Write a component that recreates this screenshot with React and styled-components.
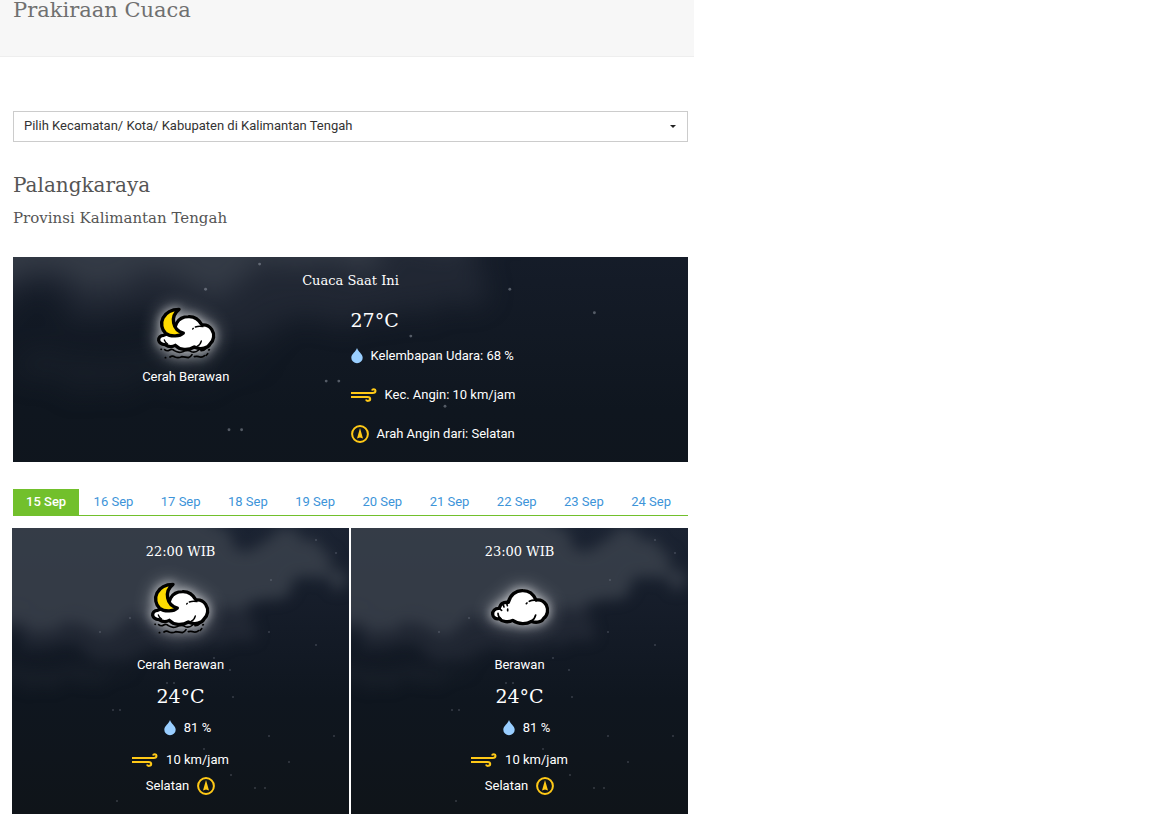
import React, { useState } from "react";
import styled, { createGlobalStyle } from "styled-components";

const slab = `"Roboto Slab", "DejaVu Serif", serif`;

const GlobalStyle = createGlobalStyle`
  *, *::before, *::after { box-sizing: border-box; }
  body {
    margin: 0;
    background: #fff;
    color: #333;
    font-family: Roboto, "Liberation Sans", sans-serif;
    font-size: 13px;
    line-height: 20px;
  }
  h1, h2, h3, p { margin: 0; padding: 0; font-weight: 400; }
`;

const Page = styled.div`
  display: grid;
  grid-template-columns: minmax(0, 347fr) minmax(0, 229fr);
`;

const Column = styled.div`
  grid-column: 1;
`;

const Header = styled.header`
  padding: 0 13px 36px;
  background: #f7f7f7;
  border-bottom: 1px solid #eee;
`;

const Title = styled.h1`
  color: #707070;
  font-family: ${slab};
  font-size: 21px;
  line-height: 20px;
`;

const Main = styled.main`
  padding: 54px 6px 5px 13px;
`;

const SelectField = styled.div`
  display: grid;
  align-items: center;
`;

const Select = styled.select`
  grid-area: 1 / 1;
  width: 100%;
  height: 31px;
  padding: 0 24px 2px 10px;
  appearance: none;
  border: 1px solid #ccc;
  border-radius: 0;
  background: #fff;
  color: #333;
  font-family: inherit;
  font-size: 13px;
`;

const Caret = styled.svg`
  grid-area: 1 / 1;
  justify-self: end;
  margin-right: 12px;
  pointer-events: none;
`;

const Place = styled.h2`
  margin-top: 28px;
  color: #555;
  font-family: ${slab};
  font-size: 20px;
  line-height: 30px;
`;

const Province = styled.p`
  margin-top: 8px;
  color: #555;
  font-family: ${slab};
  font-size: 15px;
  line-height: 20px;
`;

const Panel = styled.section`
  position: relative;
  isolation: isolate;
  overflow: hidden;
  background: #10151d;
  color: #fff;
`;

const Sky = styled.svg`
  position: absolute;
  inset: 0;
  z-index: -1;
  width: 100%;
  height: 100%;
`;

const Current = styled(Panel)`
  margin-top: 29px;
  padding: 14px 0 18px;
`;

const PanelTitle = styled.h3`
  font-family: ${slab};
  font-size: 13px;
  line-height: 20px;
  text-align: center;
`;

const CurrentBody = styled.div`
  display: grid;
  grid-template-columns: 1fr 1fr;
  margin-top: 14px;
`;

const CurrentSky = styled.div`
  display: flex;
  flex-direction: column;
  align-items: center;
  gap: 7px;
  padding: 3px 0 0 8px;
`;

const Readings = styled.div`
  display: flex;
  flex-direction: column;
  gap: 19px;
`;

const Temperature = styled.p`
  font-family: ${slab};
  font-size: 19px;
  line-height: 30px;
`;

const CurrentTemperature = styled(Temperature)`
  margin-bottom: -8px;
`;

const Reading = styled.p`
  display: flex;
  align-items: center;
  gap: 8px;
  height: 20px;
  padding-left: ${(p) => (p.$indent ? "14px" : "0")};
`;

const Tabs = styled.div`
  display: flex;
  justify-content: space-between;
  margin-top: 27px;
  padding-right: 4px;
  border-bottom: 1px solid #72c02c;
`;

const Tab = styled.button`
  height: 26px;
  padding: 0 13px 2px;
  border: 0;
  background: ${(p) => (p.$active ? "#72c02c" : "transparent")};
  color: ${(p) => (p.$active ? "#fff" : "#3d94d9")};
  font-family: inherit;
  font-size: 13px;
  font-weight: ${(p) => (p.$active ? 500 : 400)};
  white-space: nowrap;
  cursor: pointer;
`;

const Hours = styled.div`
  display: grid;
  grid-template-columns: 1fr 1fr;
  gap: 2px;
  margin: 12px 0 0 -1px;
`;

const Hour = styled(Panel)`
  display: flex;
  flex-direction: column;
  align-items: center;
  padding: 14px 0 18px;
`;

const HourSky = styled.div`
  display: flex;
  flex-direction: column;
  align-items: center;
  gap: 20px;
  margin: 21px 0 6px;
`;

const HourReadings = styled.div`
  display: flex;
  flex-direction: column;
  align-items: center;
  margin-top: 7px;
`;

const HourReading = styled(Reading)`
  margin-bottom: ${(p) => (p.$tight ? "6px" : "12px")};
  &:last-child { margin-bottom: 0; }
`;

const Glow = styled.svg`
  display: block;
  overflow: visible;
  filter: drop-shadow(0 0 5px rgba(255, 255, 255, 0.55)) drop-shadow(0 0 9px rgba(255, 255, 255, 0.5));
`;

const stars = [
  [323, 12], [343, 25], [278, 52], [137, 90], [107, 104], [276, 104], [323, 117],
  [221, 130], [237, 142], [174, 155], [181, 155], [240, 169], [120, 182], [127, 182],
  [276, 208], [341, 208], [211, 221], [296, 234], [238, 247], [262, 260], [272, 260], [124, 273],
];

function NightSky({ id }) {
  return (
    <Sky viewBox="0 0 375 286" preserveAspectRatio="xMidYMid slice" aria-hidden="true">
      <defs>
        <linearGradient id={`${id}-base`} x1="0" y1="0" x2="0" y2="1">
          <stop offset="0" stopColor="#1b2332" />
          <stop offset="0.35" stopColor="#141b27" />
          <stop offset="0.6" stopColor="#0f161f" />
          <stop offset="1" stopColor="#0f1419" />
        </linearGradient>
        <filter id={`${id}-cloud`} x="-20%" y="-20%" width="140%" height="140%" colorInterpolationFilters="sRGB">
          <feTurbulence type="fractalNoise" baseFrequency="0.03 0.035" numOctaves="4" seed="3" result="noise" />
          <feDisplacementMap in="SourceGraphic" in2="noise" scale="36" xChannelSelector="R" yChannelSelector="G" />
          <feGaussianBlur stdDeviation="7" />
        </filter>
      </defs>
      <rect width="375" height="286" fill={`url(#${id}-base)`} />
      <g filter={`url(#${id}-cloud)`}>
        <path d="M-20-20H160L225-4L250 14L290 2L320 14L352 40L352 52L295 56L270 72L225 78L190 94L150 92L128 98L110 104L88 98L50 96L20 100L-20 98Z" fill="#3a414b" fillOpacity="0.85" />
        <path d="M-20 70L80 88L180 80L250 66L262 104L215 122L155 120L110 126L50 116L-20 110Z" fill="#343a45" fillOpacity="0.4" />
        <path d="M0 145L85 136L145 145L90 156L0 160Z" fill="#252a34" fillOpacity="0.3" />
      </g>
      {stars.map(([x, y]) => (
        <circle key={`${x}-${y}`} cx={x} cy={y} r="0.8" fill="#a8b0ba" fillOpacity="0.45" />
      ))}
    </Sky>
  );
}

function MoonCloudIcon() {
  return (
    <Glow width="58" height="52" viewBox="81 54 174 156" role="img" aria-label="Cerah Berawan">
      <g stroke="#000" strokeLinejoin="round" strokeLinecap="round">
        <path d="M101 136C91 136 85 143 86 151C88 159 96 163 105 164C114 170 127 171 136 166C149 180 173 183 193 171C213 181 235 173 240 162C252 151 255 133 245 118C238 108 226 104 216 105C207 89 193 79 175 80C159 80 147 87 140 99L130 124Z" fill="#fff" strokeWidth="10" />
        <path d="M147 58C127 58 108 67 99 84C91 99 95 120 107 130C123 142 150 139 160 129C145 125 134 115 131 99C128 84 134 68 147 58Z" fill="#ffdc00" strokeWidth="10" />
        <path d="M188 117L190 115M196 111Q207 107 219 110M103 150Q105 157 113 162M214 153Q211 165 201 169" fill="none" strokeWidth="4" />
        <path d="M93 178h1M104 179q7 6 15 1t14 2q12 8 25 3q15-8 26 0q12 4 22-5M213 182q8 1 14-6M236 180l2-1M106 203h1M120 201q7-5 15 0q10 4 20-1q12 1 20 3q7-2 11-9M193 200q10-2 17 1q8 1 14-4M229 196l4-5" fill="none" strokeWidth="5" />
      </g>
    </Glow>
  );
}

function CloudIcon() {
  return (
    <Glow width="58" height="52" viewBox="60 39 174 156" role="img" aria-label="Berawan">
      <path d="M83 115C72 115 64 123 65 133C66 143 75 148 84 146C94 156 113 158 125 151C143 164 167 163 181 154C197 160 213 156 218 145C230 137 233 119 226 105C219 94 207 88 195 90C187 72 174 62 156 62C134 61 117 75 112 97C99 96 88 102 85 114Z" fill="#fff" stroke="#000" strokeWidth="10" strokeLinejoin="round" />
      <path d="M84 115L92 121M97 105L99 111M107 99L109 107M110 117v5M81 130Q81 141 90 146M194 135Q191 148 181 153M166 101l2-2M175 94Q185 89 197 91" fill="none" stroke="#000" strokeWidth="5" strokeLinecap="round" />
    </Glow>
  );
}

function DropIcon() {
  return (
    <svg width="12" height="16" viewBox="0 0 12 16" aria-hidden="true">
      <path d="M6 0C5 3.500 .3 6 .3 9.700A5.700 5.500 0 0 0 11.700 9.700C11.700 6 7 3.500 6 0Z" fill="#99ceff" />
    </svg>
  );
}

function WindIcon() {
  return (
    <svg width="26" height="14" viewBox="0 0 26 14" fill="none" stroke="#ffc917" strokeWidth="2" aria-hidden="true">
      <path d="M0 5H21.500C23.500 5 24.500 4 24.500 2.700C24.500.8 21.500.6 21 2.500M0 9H16.500C18.500 9 19.200 10 19.200 11C19.200 13.200 15.500 13.600 15 11.500" />
    </svg>
  );
}

function CompassIcon() {
  return (
    <svg width="18" height="18" viewBox="0 0 18 18" aria-hidden="true">
      <circle cx="9" cy="9" r="7.900" fill="none" stroke="#ffc917" strokeWidth="2" />
      <path d="M9 3L12 13.500L9 12.500L6 13.500Z" fill="#ffc917" />
    </svg>
  );
}

const dates = Array.from({ length: 10 }, (_, i) => `${15 + i} Sep`);

const hours = [
  { time: "22:00 WIB", sky: "Cerah Berawan", Icon: MoonCloudIcon },
  { time: "23:00 WIB", sky: "Berawan", Icon: CloudIcon },
];

export default function App() {
  const [active, setActive] = useState(0);
  return (
    <>
      <GlobalStyle />
      <Page>
        <Column>
          <Header>
            <Title>Prakiraan Cuaca</Title>
          </Header>
          <Main>
            <SelectField>
              <Select aria-label="Pilih Kecamatan/ Kota/ Kabupaten">
                <option>Pilih Kecamatan/ Kota/ Kabupaten di Kalimantan Tengah</option>
              </Select>
              <Caret width="6" height="3" viewBox="0 0 6 3" aria-hidden="true">
                <path d="M0 0H6L3 3Z" fill="#222" />
              </Caret>
            </SelectField>
            <Place>Palangkaraya</Place>
            <Province>Provinsi Kalimantan Tengah</Province>

            <Current>
              <NightSky id="current" />
              <PanelTitle>Cuaca Saat Ini</PanelTitle>
              <CurrentBody>
                <CurrentSky>
                  <MoonCloudIcon />
                  <p>Cerah Berawan</p>
                </CurrentSky>
                <Readings>
                  <CurrentTemperature>27°C</CurrentTemperature>
                  <Reading><DropIcon />Kelembapan Udara: 68 %</Reading>
                  <Reading><WindIcon />Kec. Angin: 10 km/jam</Reading>
                  <Reading><CompassIcon />Arah Angin dari: Selatan</Reading>
                </Readings>
              </CurrentBody>
            </Current>

            <Tabs role="tablist">
              {dates.map((date, i) => (
                <Tab
                  key={date}
                  type="button"
                  role="tab"
                  aria-selected={i === active}
                  $active={i === active}
                  onClick={() => setActive(i)}
                >
                  {date}
                </Tab>
              ))}
            </Tabs>

            <Hours>
              {hours.map(({ time, sky, Icon }, i) => (
                <Hour key={time}>
                  <NightSky id={`hour-${i}`} />
                  <PanelTitle>{time}</PanelTitle>
                  <HourSky>
                    <Icon />
                    <p>{sky}</p>
                  </HourSky>
                  <Temperature>24°C</Temperature>
                  <HourReadings>
                    <HourReading $indent><DropIcon />81 %</HourReading>
                    <HourReading $tight><WindIcon />10 km/jam</HourReading>
                    <HourReading>Selatan<CompassIcon /></HourReading>
                  </HourReadings>
                </Hour>
              ))}
            </Hours>
          </Main>
        </Column>
      </Page>
    </>
  );
}
